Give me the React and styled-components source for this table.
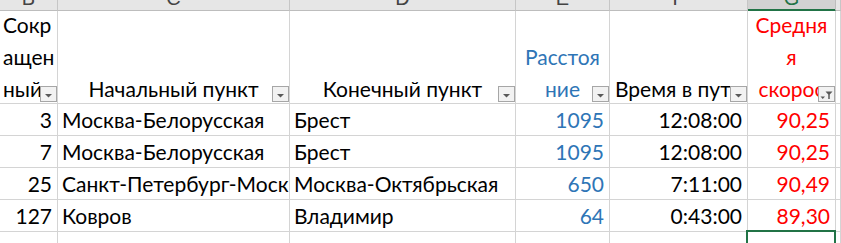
import React from 'react';
import styled, { createGlobalStyle } from 'styled-components';

const GlobalStyle = createGlobalStyle`
  html, body {
    margin: 0;
    padding: 0;
    background: #fff;
  }
  body {
    font-family: Lato, 'Noto Sans', 'Liberation Sans', sans-serif;
    font-size: 21px;
    color: #000;
  }
`;

const COLUMNS = '58px 232px 226px 94px 138px 88px 1fr';

const Sheet = styled.div`
  width: 841px;
  height: 243px;
  overflow: hidden;
  background: #fff;
`;

const Row = styled.div`
  display: grid;
  grid-template-columns: ${COLUMNS};
`;

const Letter = styled.div`
  height: 10px;
  display: flex;
  align-items: flex-end;
  justify-content: center;
  overflow: hidden;
  background: ${(p) => (p.$selected ? '#d2d2d2' : '#e6e6e6')};
  border-right: 1px solid ${(p) => (p.$selected ? '#bdbdbd' : '#c6c6c6')};
  border-bottom: 1px solid ${(p) => (p.$selected ? '#217346' : '#bdbdbd')};
  box-shadow: ${(p) => (p.$selected ? 'inset 0 -1px 0 #217346' : 'none')};
  color: ${(p) => (p.$selected ? '#217346' : '#444')};
  font-family: 'Liberation Sans', sans-serif;
  font-size: 20px;

  span {
    line-height: 20px;
    margin-bottom: 2px;
  }
`;

const HeadCell = styled.div`
  position: relative;
  height: 92px;
  display: flex;
  flex-direction: column;
  justify-content: flex-end;
  align-items: ${(p) => (p.$align === 'left' ? 'flex-start' : 'center')};
  overflow: hidden;
  white-space: nowrap;
  border-right: 1px solid #d4d4d4;
  border-bottom: 1px solid #d4d4d4;
  color: ${(p) => p.$color || '#000'};
  line-height: 32px;
`;

const HeadText = styled.div`
  display: flex;
  flex-direction: column;
  align-items: inherit;
  margin-bottom: -2px;
  padding-left: ${(p) => p.$indent || 0}px;
`;

const Cell = styled.div`
  height: 31px;
  line-height: 32px;
  padding: ${(p) => (p.$align === 'right' ? '0 5px 0 0' : '0 0 0 4px')};
  text-align: ${(p) => p.$align || 'left'};
  white-space: nowrap;
  overflow: hidden;
  color: ${(p) => p.$color || '#000'};
  border-right: 1px solid #d4d4d4;
  border-bottom: 1px solid #d4d4d4;
`;

const ActiveCell = styled(Cell)`
  position: relative;
  margin-left: -2px;
  border-left: 2px solid #217346;
  border-top: 2px solid #217346;
  border-right: 2px solid #217346;
  margin-top: -2px;
  height: 40px;
`;

const FilterButton = styled.div`
  position: absolute;
  right: 0;
  bottom: 1px;
  width: 17px;
  height: 16px;
  box-sizing: border-box;
  border: 1px solid #a6a6a6;
  background: #f2f2f2;
  display: flex;
  align-items: center;
  justify-content: center;

  svg {
    display: block;
  }
`;

const RED = '#ff0000';
const BLUE = '#2e75b6';

function Filter({ active }) {
  return (
    <FilterButton>
      {active ? (
        <svg width="15" height="14" viewBox="0 0 15 14">
          <path d="M1.5 9.5h4.5l-2.25 2.5z" fill="#595959" />
          <path d="M6.5 4.5h7l-2.75 3v4.5h-1.5v-4.5z" fill="#595959" />
        </svg>
      ) : (
        <svg width="15" height="14" viewBox="0 0 15 14">
          <path d="M4 7h7l-3.5 3.5z" fill="#595959" />
        </svg>
      )}
    </FilterButton>
  );
}

const rows = [
  ['3', 'Москва-Белорусская', 'Брест', '1095', '12:08:00', '90,25'],
  ['7', 'Москва-Белорусская', 'Брест', '1095', '12:08:00', '90,25'],
  ['25', 'Санкт-Петербург-Москва', 'Москва-Октябрьская', '650', '7:11:00', '90,49'],
  ['127', 'Ковров', 'Владимир', '64', '0:43:00', '89,30'],
];

export default function App() {
  return (
    <Sheet>
      <GlobalStyle />
      <Row>
        {['B', 'C', 'D', 'E', 'F', 'G', 'H'].map((l) => (
          <Letter key={l} $selected={l === 'G'}>
            <span>{l}</span>
          </Letter>
        ))}
      </Row>
      <Row>
        <HeadCell $align="left">
          <HeadText $indent={3}>
            <span>Сокр</span>
            <span>ащен</span>
            <span>ный</span>
          </HeadText>
          <Filter />
        </HeadCell>
        <HeadCell>
          <HeadText>Начальный пункт</HeadText>
          <Filter />
        </HeadCell>
        <HeadCell>
          <HeadText>Конечный пункт</HeadText>
          <Filter />
        </HeadCell>
        <HeadCell $color={BLUE}>
          <HeadText>
            <span>Расстоя</span>
            <span>ние</span>
          </HeadText>
          <Filter />
        </HeadCell>
        <HeadCell $align="left">
          <HeadText $indent={5}>Время в пути</HeadText>
          <Filter />
        </HeadCell>
        <HeadCell $color={RED}>
          <HeadText>
            <span>Средня</span>
            <span>я</span>
            <span>скорос</span>
          </HeadText>
          <Filter active />
        </HeadCell>
        <HeadCell />
      </Row>
      {rows.map((r, i) => (
        <Row key={i}>
          <Cell $align="right">{r[0]}</Cell>
          <Cell>{r[1]}</Cell>
          <Cell>{r[2]}</Cell>
          <Cell $align="right" $color={BLUE}>{r[3]}</Cell>
          <Cell $align="right">{r[4]}</Cell>
          <Cell $align="right" $color={RED}>{r[5]}</Cell>
          <Cell />
        </Row>
      ))}
      <Row>
        <Cell />
        <Cell />
        <Cell />
        <Cell />
        <Cell />
        <ActiveCell />
        <Cell />
      </Row>
    </Sheet>
  );
}
